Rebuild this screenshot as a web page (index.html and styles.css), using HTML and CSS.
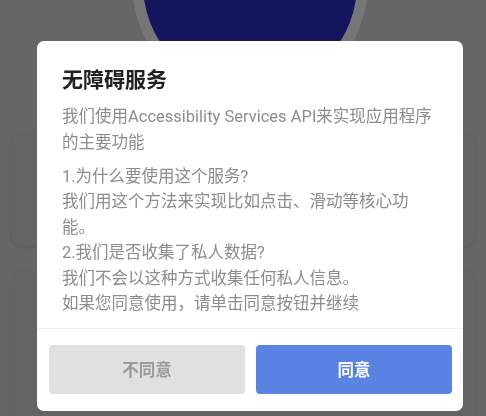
FILE: index.html
```html
<!DOCTYPE html>
<html lang="zh-CN">
<head>
  <meta charset="UTF-8">
  <meta name="viewport" content="width=device-width, initial-scale=1.0">
  <title>无障碍服务</title>
  <link rel="stylesheet" href="styles.css">
</head>
<body>
  <!-- 背景页面（被遮罩盖住） -->
  <div class="page">
    <div class="header">
      <div class="avatar"></div>
    </div>
    <div class="card card-first"></div>
    <div class="card card-second"></div>
  </div>

  <!-- 遮罩 + 弹窗 -->
  <div class="mask">
    <div class="dialog">
      <div class="dialog-body">
        <div class="dialog-title">无障碍服务</div>
        <p class="dialog-text">我们使用Accessibility Services API来实现应用程序的主要功能</p>
        <p class="dialog-text">1.为什么要使用这个服务?<br>我们用这个方法来实现比如点击、滑动等核心功能。<br>2.我们是否收集了私人数据?<br>我们不会以这种方式收集任何私人信息。<br>如果您同意使用，请单击同意按钮并继续</p>
      </div>
      <div class="dialog-footer">
        <button class="btn btn-cancel">不同意</button>
        <button class="btn btn-ok">同意</button>
      </div>
    </div>
  </div>
</body>
</html>
```

FILE: styles.css
```css
html, body {
  margin: 0;
  padding: 0;
}

body {
  background: #666666;
  font-family: Roboto, "Noto Sans CJK SC", sans-serif;
  overflow: hidden;
  height: 416px;
}

/* 背景页面 */
.page {
  padding: 0 10px 0 11px;
}

.header {
  display: flow-root;
  height: 132px;
  padding-left: 121px;
}

.avatar {
  width: 214px;
  height: 214px;
  margin-top: -134px;
  border-radius: 50%;
  border: 11px solid #767676;
  background: #15155d;
}

.card {
  border-radius: 10px;
  background: #646464;
  box-shadow: 0 1px 3px rgba(0, 0, 0, 0.12);
}

.card-first {
  height: 114px;
}

.card-second {
  height: 160px;
  margin-top: 25px;
}

/* 遮罩 */
.mask {
  position: fixed;
  top: 0;
  left: 0;
  right: 0;
  bottom: 0;
  padding: 41px 0 0 37px;
}

/* 弹窗 */
.dialog {
  width: 426px;
  background: #ffffff;
  border-radius: 7px;
  overflow: hidden;
}

.dialog-body {
  padding: 24px 25px 11px 25px;
  border-bottom: 1px solid #eeeeee;
}

.dialog-title {
  font-size: 21px;
  font-weight: bold;
  color: #222222;
  line-height: 30px;
  margin-bottom: 9px;
}

.dialog-text {
  margin: 0 0 8.5px 0;
  font-size: 16.5px;
  line-height: 25.5px;
  color: #8c8c8c;
}

.dialog-text:last-child {
  margin-bottom: 0;
}

.dialog-footer {
  display: flex;
  gap: 11px;
  padding: 16px 11px 17px 12px;
}

.btn {
  flex: 1;
  height: 49px;
  border: none;
  border-radius: 4px;
  font-family: Roboto, "Noto Sans CJK SC", sans-serif;
  font-size: 16.5px;
  font-weight: bold;
}

.btn-cancel {
  background: #e0e0e0;
  color: #9a9a9a;
}

.btn-ok {
  background: #5a84e3;
  color: #ffffff;
}
```
